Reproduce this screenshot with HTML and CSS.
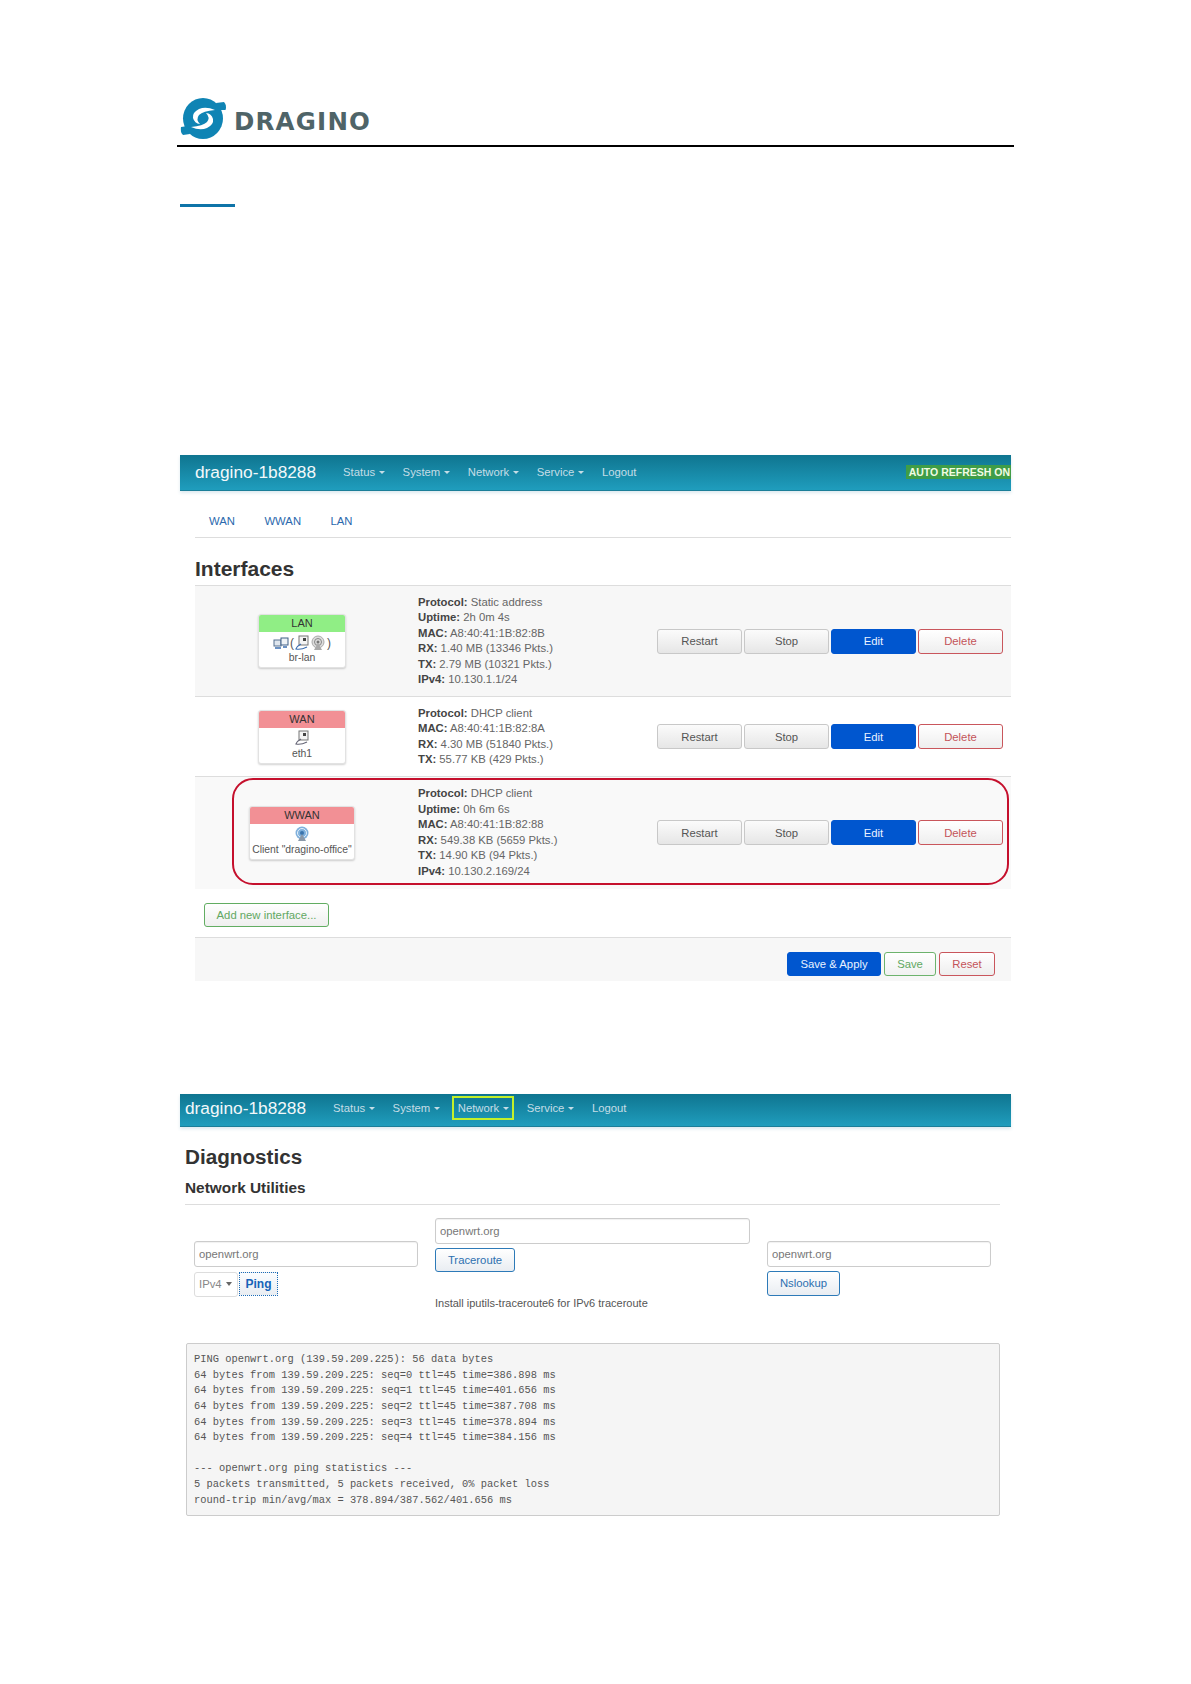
FILE: index.html
```html
<!DOCTYPE html>
<html lang="en">
<head>
<meta charset="utf-8">
<title>Dragino</title>
<link rel="stylesheet" href="styles.css">
</head>
<body>
<header class="doc-head">
  <div class="logo">
    <svg class="logo-mark" viewBox="0 0 47 41" width="47" height="41">
      <ellipse cx="23" cy="20.5" rx="20" ry="20.5" fill="#0f84b4"/>
      <path d="M36 5 L44 4 Q47 7 45.5 12 L38 12Z" fill="#0f84b4"/>
      <path d="M10 36 L3 37 Q0 34 1 29 L8 28Z" fill="#0f84b4"/>
      <path d="M35 12 Q26 8 19 11 Q12 14.500 13 20 Q14.500 25.500 20 26 Q15.500 21.500 19 17 Q23 13 35 12Z" fill="#fff"/>
      <path d="M11 29 Q20 33 27 30 Q34 26.500 33 21 Q31.500 15.500 26 15 Q30.500 19.500 27 24 Q23 28 11 29Z" fill="#fff"/>
    </svg>
    <span class="logo-text">DRAGINO</span>
  </div>
</header>
<div class="doc-link-rule"></div>

<section class="shot shot-first">
  <nav class="navbar">
    <span class="brand">dragino-1b8288</span>
    <span class="nav-item">Status<i class="caret"></i></span>
    <span class="nav-item">System<i class="caret"></i></span>
    <span class="nav-item">Network<i class="caret"></i></span>
    <span class="nav-item">Service<i class="caret"></i></span>
    <span class="nav-item">Logout</span>
    <span class="refresh">AUTO REFRESH ON</span>
  </nav>
  <div class="content">
    <ul class="tabs">
      <li>WAN</li>
      <li>WWAN</li>
      <li>LAN</li>
    </ul>
    <h2 class="page-title">Interfaces</h2>

    <div class="iface-row">
      <div class="label-cell">
        <div class="iface-label">
          <div class="label-head label-green">LAN</div>
          <div class="label-body">
            <div class="label-icons">
              <svg viewBox="0 0 16 14" width="16" height="14"><rect x="1" y="4" width="7" height="6" fill="#dfe6ee" stroke="#56708f"/><rect x="8" y="2" width="7" height="7" fill="#eef2f6" stroke="#3e5f86"/><path d="M2 12h6M10 11h4" stroke="#3b6db0" stroke-width="1.500"/></svg>
              <span class="paren">(</span>
              <svg viewBox="0 0 14 16" width="14" height="16"><rect x="4" y="1" width="9" height="9" fill="#f4f4f4" stroke="#777"/><rect x="8" y="3" width="3" height="3" fill="#444"/><path d="M6 9 Q2 11 1 14 Q6 15 12 12" fill="none" stroke="#3b6db0" stroke-width="1.200"/></svg>
              <svg viewBox="0 0 16 16" width="16" height="16"><circle cx="8" cy="7" r="6" fill="#ddd" stroke="#aaa"/><circle cx="8" cy="7" r="3.500" fill="none" stroke="#888"/><circle cx="8" cy="7" r="1.500" fill="#777"/><path d="M4 15h8L8 8Z" fill="#aaa"/></svg>
              <span class="paren">)</span>
            </div>
            <div class="label-name">br-lan</div>
          </div>
        </div>
      </div>
      <div class="info">
        <div><b>Protocol:</b> Static address</div>
        <div><b>Uptime:</b> 2h 0m 4s</div>
        <div><b>MAC:</b> A8:40:41:1B:82:8B</div>
        <div><b>RX:</b> 1.40 MB (13346 Pkts.)</div>
        <div><b>TX:</b> 2.79 MB (10321 Pkts.)</div>
        <div><b>IPv4:</b> 10.130.1.1/24</div>
      </div>
      <div class="actions">
        <button class="btn btn-act">Restart</button>
        <button class="btn btn-act">Stop</button>
        <button class="btn btn-act btn-blue">Edit</button>
        <button class="btn btn-act btn-red">Delete</button>
      </div>
    </div>

    <div class="iface-row iface-plain">
      <div class="label-cell">
        <div class="iface-label">
          <div class="label-head label-red">WAN</div>
          <div class="label-body">
            <div class="label-icons">
              <svg viewBox="0 0 14 16" width="14" height="16"><rect x="4" y="1" width="9" height="9" fill="#f4f4f4" stroke="#777"/><rect x="8" y="3" width="3" height="3" fill="#444"/><path d="M6 9 Q2 11 1 14 Q6 15 12 12" fill="none" stroke="#667" stroke-width="1.200"/></svg>
            </div>
            <div class="label-name">eth1</div>
          </div>
        </div>
      </div>
      <div class="info">
        <div><b>Protocol:</b> DHCP client</div>
        <div><b>MAC:</b> A8:40:41:1B:82:8A</div>
        <div><b>RX:</b> 4.30 MB (51840 Pkts.)</div>
        <div><b>TX:</b> 55.77 KB (429 Pkts.)</div>
      </div>
      <div class="actions">
        <button class="btn btn-act">Restart</button>
        <button class="btn btn-act">Stop</button>
        <button class="btn btn-act btn-blue">Edit</button>
        <button class="btn btn-act btn-red">Delete</button>
      </div>
    </div>

    <div class="iface-row iface-marked">
      <div class="label-cell">
        <div class="iface-label iface-label-wide">
          <div class="label-head label-red">WWAN</div>
          <div class="label-body">
            <div class="label-icons">
              <svg viewBox="0 0 16 16" width="16" height="16"><circle cx="8" cy="7" r="6.500" fill="#7fb0dc"/><circle cx="8" cy="7" r="4.500" fill="none" stroke="#e4f0fa"/><circle cx="8" cy="7" r="2" fill="#3a74ad"/><path d="M4 15h8L8 8Z" fill="#8a98a8"/></svg>
            </div>
            <div class="label-name">Client "dragino-office"</div>
          </div>
        </div>
      </div>
      <div class="info">
        <div><b>Protocol:</b> DHCP client</div>
        <div><b>Uptime:</b> 0h 6m 6s</div>
        <div><b>MAC:</b> A8:40:41:1B:82:88</div>
        <div><b>RX:</b> 549.38 KB (5659 Pkts.)</div>
        <div><b>TX:</b> 14.90 KB (94 Pkts.)</div>
        <div><b>IPv4:</b> 10.130.2.169/24</div>
      </div>
      <div class="actions">
        <button class="btn btn-act">Restart</button>
        <button class="btn btn-act">Stop</button>
        <button class="btn btn-act btn-blue">Edit</button>
        <button class="btn btn-act btn-red">Delete</button>
      </div>
      <div class="red-mark"></div>
    </div>

    <div class="add-row"><button class="btn btn-add">Add new interface...</button></div>
    <div class="form-foot">
      <button class="btn btn-blue btn-apply">Save &amp; Apply</button>
      <button class="btn btn-green btn-save">Save</button>
      <button class="btn btn-red btn-reset">Reset</button>
    </div>
  </div>
</section>

<section class="shot shot-second">
  <nav class="navbar navbar-slim">
    <span class="brand">dragino-1b8288</span>
    <span class="nav-item">Status<i class="caret"></i></span>
    <span class="nav-item">System<i class="caret"></i></span>
    <span class="nav-item nav-marked">Network<i class="caret"></i></span>
    <span class="nav-item">Service<i class="caret"></i></span>
    <span class="nav-item">Logout</span>
  </nav>
  <div class="diag">
    <h2 class="diag-title">Diagnostics</h2>
    <h3 class="diag-sub">Network Utilities</h3>
  </div>
  <div class="tools">
    <div class="tool tool-ping">
      <input class="field" type="text" value="openwrt.org">
      <div class="ping-row">
        <div class="select">IPv4<i class="select-arrow"></i></div>
        <button class="btn btn-ping">Ping</button>
      </div>
    </div>
    <div class="tool tool-trace">
      <input class="field" type="text" value="openwrt.org">
      <button class="btn btn-outline btn-trace">Traceroute</button>
      <p class="note">Install iputils-traceroute6 for IPv6 traceroute</p>
    </div>
    <div class="tool tool-ns">
      <input class="field" type="text" value="openwrt.org">
      <button class="btn btn-outline btn-ns">Nslookup</button>
    </div>
  </div>
  <pre class="output">PING openwrt.org (139.59.209.225): 56 data bytes
64 bytes from 139.59.209.225: seq=0 ttl=45 time=386.898 ms
64 bytes from 139.59.209.225: seq=1 ttl=45 time=401.656 ms
64 bytes from 139.59.209.225: seq=2 ttl=45 time=387.708 ms
64 bytes from 139.59.209.225: seq=3 ttl=45 time=378.894 ms
64 bytes from 139.59.209.225: seq=4 ttl=45 time=384.156 ms

--- openwrt.org ping statistics ---
5 packets transmitted, 5 packets received, 0% packet loss
round-trip min/avg/max = 378.894/387.562/401.656 ms</pre>
</section>
</body>
</html>
```
FILE: styles.css
```css
* { box-sizing: border-box; }
html, body { margin: 0; padding: 0; background: #fff; }
body {
  font-family: "Liberation Sans", Arial, sans-serif;
  font-size: 11.300px;
  color: #555;
  height: 1684px;
  overflow: hidden;
}
.doc-head {
  width: 837px;
  margin-left: 177px;
  padding: 98px 0 6px 3px;
  border-bottom: 2px solid #000;
}
.logo { display: flex; align-items: center; height: 41px; }
.logo-mark { flex: none; }
.logo-text {
  margin-left: 7px;
  margin-top: 8px;
  font-family: "DejaVu Sans", sans-serif;
  font-weight: 700;
  font-size: 24.500px;
  letter-spacing: 1.200px;
  line-height: 1;
  color: #4f6468;
}
.doc-link-rule {
  width: 55px;
  height: 3px;
  margin: 57px 0 0 180px;
  background: #0f74a8;
}
.shot { width: 831px; margin-left: 180px; }
.shot-first { margin-top: 248px; }
.shot-second { margin-top: 113px; }

.navbar {
  display: flex;
  align-items: center;
  gap: 17.500px;
  height: 36px;
  padding: 0 0 1px 15px;
  background: linear-gradient(#0f7590, #1f9dbd);
  border-bottom: 1px solid #1b7e98;
  box-shadow: 0 2px 3px rgba(120, 170, 190, .25);
  color: #c5dde6;
  font-size: 11.300px;
}
.navbar-slim { height: 33px; padding: 0 0 3px 5px; }
.brand { margin-right: 9.500px; font-size: 17.300px; color: #f2f8fa; }
.nav-item { position: relative; display: flex; align-items: center; }
.caret {
  width: 0;
  height: 0;
  margin-left: 4px;
  border-top: 3px solid #c5dde6;
  border-left: 3px solid transparent;
  border-right: 3px solid transparent;
}
.nav-marked::after {
  content: "";
  position: absolute;
  inset: -6px -5px -6px -6px;
  border: 2px solid #c3f02a;
}
.refresh {
  margin: -1px 0 0 auto;
  padding: 0 1px 0 3px;
  background: #3f9d47;
  color: #f2fbe4;
  font-size: 10.500px;
  font-weight: 700;
  line-height: 14px;
  white-space: nowrap;
}

.content { margin-left: 15px; }
.tabs {
  display: flex;
  gap: 29.500px;
  margin: 0;
  padding: 22px 0 8px 14px;
  list-style: none;
  border-bottom: 1px solid #ddd;
  color: #2b69ad;
  font-size: 11.300px;
  line-height: 16px;
}
.page-title {
  margin: 19px 0 0;
  padding-bottom: 4px;
  border-bottom: 1px solid #ddd;
  color: #333;
  font-size: 21px;
  line-height: 24px;
}
.iface-row {
  position: relative;
  display: flex;
  align-items: center;
  padding: 8.500px 0 7.500px;
  background: #f7f7f7;
  border-bottom: 1px solid #ddd;
}
.iface-plain { padding: 9px 0 8px; background: #fff; }
.iface-marked { padding: 9px 0 9.400px; background: #f9f9f9; border-bottom: 0; }
.label-cell { flex: none; width: 214px; display: flex; justify-content: center; }
.iface-label {
  width: 88px;
  background: #fff;
  border-radius: 3px;
  border: 1px solid #e2e2e2;
  box-shadow: 0 1px 2px rgba(0, 0, 0, .18);
  overflow: hidden;
  text-align: center;
  font-size: 10.400px;
}
.iface-label-wide { width: 106px; }
.label-head { height: 18px; margin: -1px -1px 0; color: #333; font-size: 11px; line-height: 18px; }
.label-green { background: #90ee85; }
.label-red { background: #f29095; }
.label-body { padding: 2px 0 3px; color: #555; }
.label-icons { display: flex; justify-content: center; align-items: center; gap: 1px; height: 17px; }
.label-name { line-height: 13px; }
.paren { font-size: 12px; }
.info { flex: none; margin-left: 9px; width: 224px; line-height: 15.600px; color: #666; }
.info b { color: #444; }
.actions { display: flex; gap: 2px; margin-left: 15px; }

.btn {
  display: block;
  padding: 0;
  border: 1px solid #c8c8c8;
  border-radius: 3px;
  background: linear-gradient(#fbfbfb, #e6e6e6);
  color: #555;
  font-family: inherit;
  font-size: 11.300px;
  text-align: center;
}
.btn-act { width: 85px; height: 25px; }
.btn-blue { background: #0056cf; border-color: #0056cf; color: #e8f2ff; }
.btn-red { border-color: #c9565c; color: #c4545a; background: linear-gradient(#fff, #eee); }
.btn-green { border-color: #6db36d; color: #62a862; background: linear-gradient(#fff, #f1f1f1); }
.red-mark {
  position: absolute;
  left: 37px;
  right: 2px;
  top: 1px;
  bottom: 4px;
  border: 2px solid #c5102d;
  border-radius: 21px;
}
.add-row { padding: 14px 0 10px 9px; }
.btn-add {
  width: 125px;
  height: 24px;
  border-color: #62ad62;
  color: #62a862;
  background: linear-gradient(#fff, #efefef);
}
.form-foot {
  display: flex;
  justify-content: flex-end;
  gap: 3px;
  height: 44px;
  padding: 14px 16px 0 0;
  background: #f7f7f7;
  border-top: 1px solid #ddd;
}
.btn-apply { width: 94px; height: 24px; }
.btn-save { width: 52px; height: 24px; }
.btn-reset { width: 56px; height: 24px; }

.diag { width: 815px; margin-left: 5px; padding: 18px 0 6px; border-bottom: 1px solid #ddd; }
.diag-title { margin: 0; color: #333; font-size: 20.700px; line-height: 24px; }
.diag-sub { margin: 9px 0 0; color: #333; font-size: 15.400px; line-height: 20px; }
.tools {
  display: grid;
  grid-template-columns: 224px 315px 224px;
  column-gap: 17px;
  align-items: start;
  height: 138px;
  padding-left: 14px;
}
.tool { display: flex; flex-direction: column; align-items: flex-start; }
.tool-ping { margin-top: 36px; gap: 5px; }
.tool-trace { margin-top: 13px; gap: 4px; }
.tool-ns { margin-top: 36px; gap: 4px; }
.field {
  width: 100%;
  height: 26px;
  padding: 0 4px;
  border: 1px solid #ccc;
  border-radius: 3px;
  box-shadow: inset 0 1px 1px rgba(0, 0, 0, .06);
  color: #777;
  font-family: inherit;
  font-size: 11.300px;
}
.ping-row { display: flex; gap: 1px; }
.select {
  display: flex;
  align-items: center;
  justify-content: space-between;
  width: 44px;
  height: 25px;
  padding: 0 5px 0 4px;
  border: 1px solid #ddd;
  border-radius: 3px;
  color: #888;
}
.select-arrow {
  width: 0;
  height: 0;
  border-top: 4px solid #666;
  border-left: 3px solid transparent;
  border-right: 3px solid transparent;
}
.btn-ping {
  width: 39px;
  height: 24px;
  border: 1px dotted #1b6cb8;
  border-radius: 0;
  color: #1763b8;
  font-size: 12px;
  font-weight: 700;
  background: linear-gradient(#fbfdff, #e9edf2);
}
.btn-outline {
  height: 24px;
  border-color: #2d7ab8;
  color: #2d70b0;
  background: linear-gradient(#fff, #e9edf2);
}
.btn-trace { width: 80px; }
.btn-ns { width: 73px; height: 25px; }
.note { margin: 19px 0 0; color: #555; font-size: 11px; line-height: 16px; white-space: nowrap; }
.output {
  width: 814px;
  height: 173px;
  margin: 0 0 0 6px;
  padding: 8px 7px 6px;
  background: #f5f5f5;
  border: 1px solid #ccc;
  border-radius: 2px;
  color: #555;
  font-family: "Liberation Mono", "Courier New", monospace;
  font-size: 10.400px;
  line-height: 15.650px;
}
```
